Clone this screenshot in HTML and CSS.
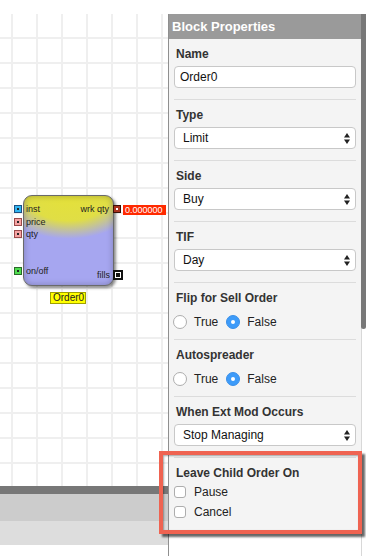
FILE: index.html
```html
<!DOCTYPE html>
<html lang="en">
<head>
    <meta charset="UTF-8">
    <meta name="viewport" content="width=device-width, initial-scale=1.0">
    <title>Block Properties</title>
    <link rel="stylesheet" href="styles.css">
</head>
<body>

<div class="app">
    <div class="workspace">
        <div class="canvas">
            <div class="block">
                <span class="port port-inst"></span>
                <span class="port port-price"></span>
                <span class="port port-qty"></span>
                <span class="port port-onoff"></span>
                <span class="port port-wrk"></span>
                <span class="port-fills"></span>

                <span class="pin-label lbl-inst">inst</span>
                <span class="pin-label lbl-price">price</span>
                <span class="pin-label lbl-qty">qty</span>
                <span class="pin-label lbl-onoff">on/off</span>
                <span class="pin-label lbl-wrk">wrk qty</span>
                <span class="pin-label lbl-fills">fills</span>

                <span class="value-tag">0.000000</span>
                <span class="block-name">Order0</span>
            </div>
        </div>
        <div class="bar bar-dark"></div>
        <div class="bar bar-mid"></div>
        <div class="bar bar-light"></div>
    </div>

    <div class="panel">
        <div class="panel-main">
            <div class="panel-header">Block Properties</div>
            <div class="panel-body">
                <div class="section">
                    <div class="field-label">Name</div>
                    <div class="text-input">Order0</div>
                </div>
                <div class="section">
                    <div class="field-label">Type</div>
                    <div class="select-box">
                        <span>Limit</span>
                        <svg width="6" height="11" viewBox="0 0 6 11"><polygon points="0,4.5 3,0 6,4.5" /><polygon points="0,6.5 3,11 6,6.5" /></svg>
                    </div>
                </div>
                <div class="section">
                    <div class="field-label">Side</div>
                    <div class="select-box">
                        <span>Buy</span>
                        <svg width="6" height="11" viewBox="0 0 6 11"><polygon points="0,4.5 3,0 6,4.5" /><polygon points="0,6.5 3,11 6,6.5" /></svg>
                    </div>
                </div>
                <div class="section">
                    <div class="field-label">TIF</div>
                    <div class="select-box">
                        <span>Day</span>
                        <svg width="6" height="11" viewBox="0 0 6 11"><polygon points="0,4.5 3,0 6,4.5" /><polygon points="0,6.5 3,11 6,6.5" /></svg>
                    </div>
                </div>
                <div class="section section-radio">
                    <div class="field-label">Flip for Sell Order</div>
                    <div class="radio-row">
                        <span class="radio"></span><span class="radio-text">True</span>
                        <span class="radio radio-on"></span><span class="radio-text">False</span>
                    </div>
                </div>
                <div class="section section-radio">
                    <div class="field-label">Autospreader</div>
                    <div class="radio-row">
                        <span class="radio"></span><span class="radio-text">True</span>
                        <span class="radio radio-on"></span><span class="radio-text">False</span>
                    </div>
                </div>
                <div class="section">
                    <div class="field-label">When Ext Mod Occurs</div>
                    <div class="select-box">
                        <span>Stop Managing</span>
                        <svg width="6" height="11" viewBox="0 0 6 11"><polygon points="0,4.5 3,0 6,4.5" /><polygon points="0,6.5 3,11 6,6.5" /></svg>
                    </div>
                </div>
                <div class="section section-last">
                    <div class="field-label">Leave Child Order On</div>
                    <div class="check-row"><span class="checkbox"></span><span>Pause</span></div>
                    <div class="check-row"><span class="checkbox"></span><span>Cancel</span></div>
                </div>
            </div>
        </div>
        <div class="scroll-track">
            <div class="scroll-thumb"></div>
        </div>
    </div>
</div>

<div class="highlight"></div>

</body>
</html>
```

FILE: styles.css
```css
body {
    margin: 0;
    padding-top: 14px;
    background-color: #ffffff;
    font-family: 'Liberation Sans', Arial, sans-serif;
    color: #222;
}
.app {
    display: flex;
    height: 542px;
}
.workspace {
    width: 168px;
    flex-shrink: 0;
}
.canvas {
    position: relative;
    height: 472px;
    background-color: #fff;
    background-image:
        linear-gradient(to bottom, #efefef 2px, transparent 2px),
        linear-gradient(to right, #efefef 2px, transparent 2px);
    background-size: 25px 25px;
    background-position: 0 23px, 11px 0;
}
.bar-dark {
    height: 8px;
    background-color: #777;
}
.bar-mid {
    height: 27px;
    background-color: #cccccc;
}
.bar-light {
    height: 24px;
    background-color: #dddddd;
}

/* block on the canvas */
.block {
    position: absolute;
    left: 23px;
    top: 181px;
    width: 91px;
    height: 91px;
    box-sizing: border-box;
    border: 1px solid #6a6a6a;
    border-radius: 9px;
    background:
        radial-gradient(ellipse 80% 48% at 50% 0%, #e4e13a 0%, #e0de45 58%, rgba(224, 222, 69, 0) 100%),
        #a6a6f0;
    box-shadow: inset 0 0 6px rgba(0, 0, 0, 0.25), 2px 2px 3px rgba(0, 0, 0, 0.45);
}
.port {
    position: absolute;
    width: 8px;
    height: 8px;
    box-sizing: border-box;
    border: 1px solid #333;
}
.port::after {
    content: "";
    position: absolute;
    left: 2px;
    top: 2px;
    width: 2px;
    height: 2px;
    background-color: #222;
}
.port-inst {
    left: -10px;
    top: 9px;
    background-color: #30b4f0;
    border-color: #1c4f80;
}
.port-price {
    left: -10px;
    top: 22px;
    background-color: #f5a3a3;
    border-color: #9a4a4a;
}
.port-qty {
    left: -10px;
    top: 34px;
    background-color: #f5a3a3;
    border-color: #9a4a4a;
}
.port-onoff {
    left: -10px;
    top: 71px;
    background-color: #4fdc4f;
    border-color: #2a6a2a;
}
.port-wrk {
    left: 89px;
    top: 9px;
    background-color: #a8321e;
    border-color: #3a1208;
}
.port-wrk::after {
    background-color: #fff;
}
.port-fills {
    position: absolute;
    left: 89px;
    top: 74px;
    width: 10px;
    height: 10px;
    box-sizing: border-box;
    border: 2px solid #111;
    background-color: #fff;
}
.port-fills::after {
    content: "";
    position: absolute;
    left: 1px;
    top: 1px;
    width: 4px;
    height: 4px;
    background-color: #111;
}
.pin-label {
    position: absolute;
    font-size: 9px;
    line-height: 10px;
    color: #222;
    white-space: nowrap;
}
.lbl-inst { left: 2px; top: 8px; }
.lbl-price { left: 2px; top: 21px; }
.lbl-qty { left: 2px; top: 33px; }
.lbl-onoff { left: 2px; top: 70px; }
.lbl-wrk { right: 4px; top: 8px; }
.lbl-fills { right: 3px; top: 74px; }
.value-tag {
    position: absolute;
    left: 99px;
    top: 9px;
    height: 10px;
    padding: 0 3px 0 2px;
    background-color: #ff2a00;
    color: #fff;
    font-size: 9px;
    line-height: 10px;
    white-space: nowrap;
}
.block-name {
    position: absolute;
    left: 26px;
    top: 96px;
    height: 10px;
    padding: 0 1px 0 2px;
    border: 1px solid #a0a000;
    background-color: #ffff00;
    font-size: 10px;
    line-height: 10px;
    color: #222;
}

/* properties panel */
.panel {
    display: flex;
    border-left: 1px solid #8f8f8f;
}
.panel-main {
    width: 192px;
}
.panel-header {
    height: 25px;
    line-height: 25px;
    padding-left: 3px;
    background-color: #9a9a9a;
    color: #fff;
    font-size: 13px;
    font-weight: bold;
}
.panel-body {
    background-color: #f4f4f4;
}
.section {
    margin: 0 5px;
    padding: 8px 0 11px;
    border-bottom: 1px solid #dcdcdc;
}
.section-radio {
    padding-bottom: 9px;
}
.section-last {
    border-bottom: none;
    padding-bottom: 12px;
}
.field-label {
    padding-left: 2px;
    margin-bottom: 4px;
    font-size: 12px;
    line-height: 15px;
    font-weight: bold;
    color: #333;
}
.section-radio .field-label {
    margin-bottom: 8px;
}
.section-last .field-label {
    margin-bottom: 1px;
}
.text-input,
.select-box {
    height: 22px;
    box-sizing: border-box;
    border: 1px solid #c8c8c8;
    border-radius: 4px;
    background-color: #fff;
    font-size: 12px;
    line-height: 20px;
    color: #111;
}
.text-input {
    padding-left: 5px;
}
.select-box {
    display: flex;
    align-items: center;
    justify-content: space-between;
    padding: 0 5px 0 8px;
}
.select-box svg {
    fill: #222;
}
.radio-row {
    display: flex;
    align-items: center;
    height: 16px;
    margin-left: -1px;
    font-size: 12px;
}
.radio {
    width: 14px;
    height: 14px;
    box-sizing: border-box;
    border: 1px solid #adadad;
    border-radius: 50%;
    background-color: #fff;
    margin-right: 7px;
}
.radio-on {
    position: relative;
    border-color: #3a8fe8;
    background-color: #3d9bf9;
}
.radio-on::after {
    content: "";
    position: absolute;
    left: 4px;
    top: 4px;
    width: 4px;
    height: 4px;
    border-radius: 50%;
    background-color: #fff;
}
.radio-text {
    margin-right: 8px;
}
.check-row {
    display: flex;
    align-items: center;
    height: 20px;
    font-size: 12px;
}
.checkbox {
    width: 12px;
    height: 12px;
    box-sizing: border-box;
    border: 1px solid #adadad;
    border-radius: 3px;
    background-color: #fff;
    margin-right: 8px;
}
.scroll-track {
    width: 5px;
    box-shadow: inset 1px 0 0 #d8d8d8;
}
.scroll-thumb {
    height: 315px;
    background-color: #787878;
    border-radius: 0 0 3px 3px;
}

/* annotation box */
.highlight {
    position: absolute;
    left: 159px;
    top: 451px;
    width: 195px;
    height: 75px;
    border: 4px solid #ef6351;
    box-shadow: 3px 3px 2px rgba(0, 0, 0, 0.6), inset 1px 1px 2px rgba(0, 0, 0, 0.35);
}
```
